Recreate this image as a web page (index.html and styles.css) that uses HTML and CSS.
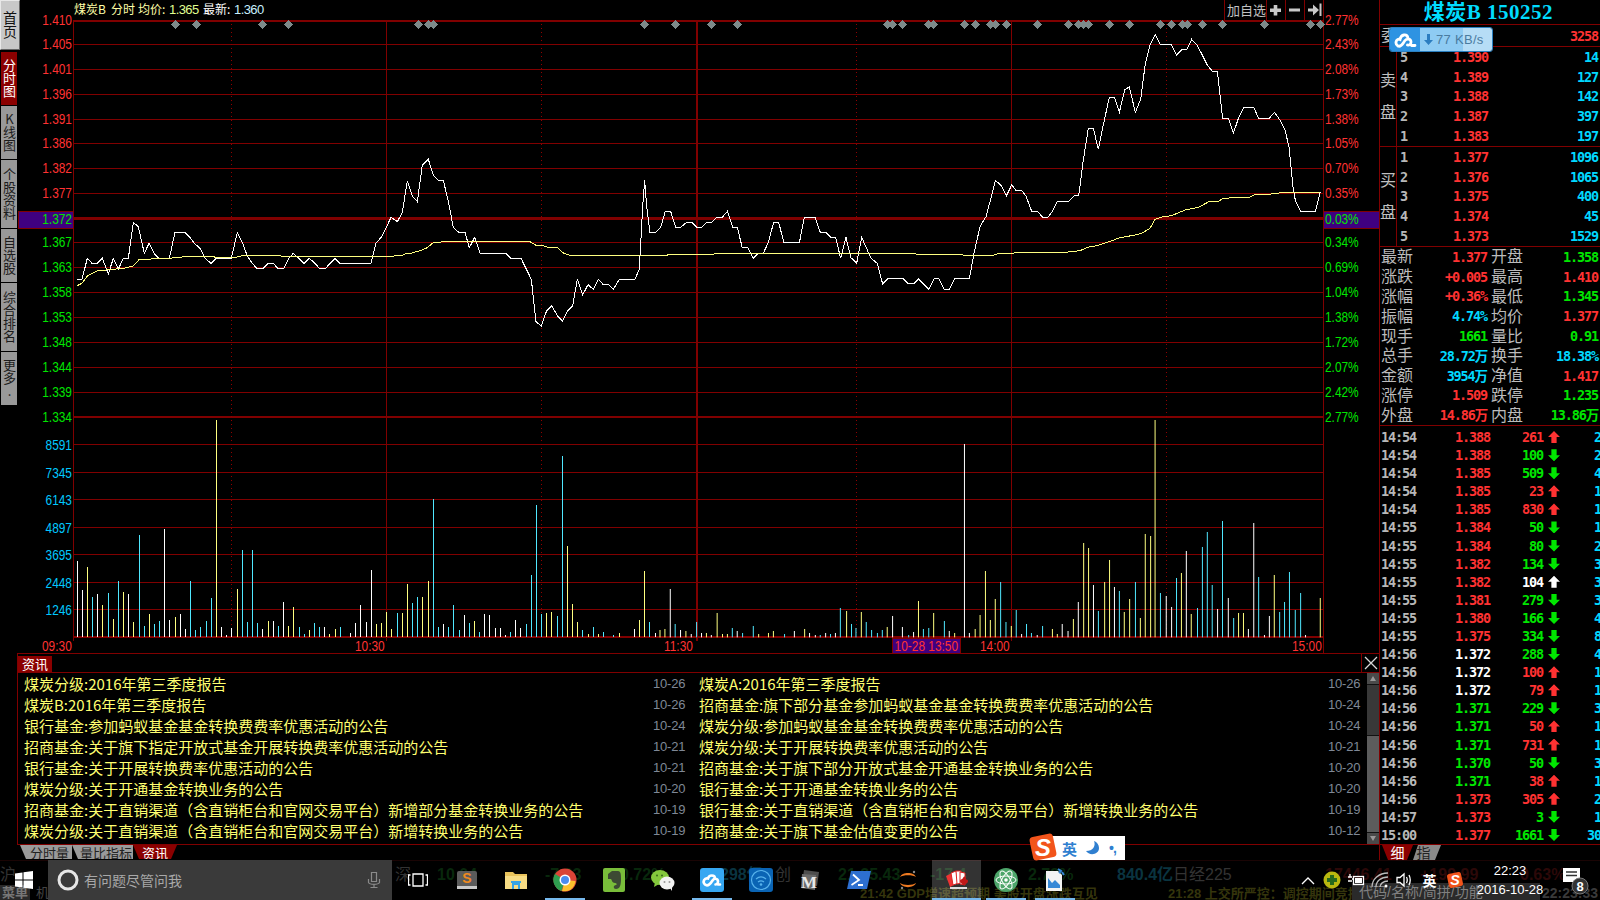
FILE: index.html
```html
<!DOCTYPE html>
<html lang="zh">
<head>
<meta charset="utf-8">
<title>煤炭B 150252</title>
<link rel="stylesheet" href="styles.css">
</head>
<body>
<svg class="defs" width="0" height="0">
  <symbol id="sg" viewBox="0 0 24 24">
    <rect x="2.5" y="2.5" width="19" height="19" rx="3" fill="#f2541b" transform="rotate(-12 12 12)"/>
    <text x="12" y="19" text-anchor="middle" class="sgs">S</text>
  </symbol>
</svg>
<div class="app">
  <div class="main">
    <nav class="nav">
      <a class="tab home">首页</a>
      <a class="tab on t3">分时图</a>
      <a class="tab t3">K线图</a>
      <a class="tab t4">个股资料</a>
      <a class="tab t3">自选股</a>
      <a class="tab t4">综合排名</a>
      <a class="tab t3">更多.</a>
    </nav>
    <section class="center">
      <svg class="chart" width="1362" height="653" viewBox="17 0 1362 653">
        <rect x="18" y="211" width="55" height="17" class="hl"/>
        <rect x="1323" y="211" width="56" height="17" class="hl"/>
        <path class="grid" d="M73 44H1323M73 69H1323M73 94H1323M73 119H1323M73 143H1323M73 168H1323M73 193H1323M73 242H1323M73 267H1323M73 292H1323M73 317H1323M73 342H1323M73 367H1323M73 392H1323M73 444H1323M73 472H1323M73 499H1323M73 527H1323M73 554H1323M73 582H1323M73 609H1323"/>
        <path class="grid b2" d="M73 20.5H1323M73 417H1323M73 637H1323"/>
        <path class="grid b3" d="M73 218H1323"/>
        <path class="grid" d="M73.500 20V641M386.500 20V641M1011.500 20V641M1323.500 0V653"/>
        <path class="grid b2" d="M697 20V641"/>
        <path class="dots" d="M231.500 20V637M541.500 20V637M856.500 20V637M1166.500 20V637"/>
        <path class="dia" d="M175 20l4.500 4.500-4.500 4.500-4.500-4.500zM196 20l4.500 4.500-4.500 4.500-4.500-4.500zM262 20l4.500 4.500-4.500 4.500-4.500-4.500zM288 20l4.500 4.500-4.500 4.500-4.500-4.500zM418 20l4.500 4.500-4.500 4.500-4.500-4.500zM428 20l4.500 4.500-4.500 4.500-4.500-4.500zM433 20l4.500 4.500-4.500 4.500-4.500-4.500zM644 20l4.500 4.500-4.500 4.500-4.500-4.500zM675 20l4.500 4.500-4.500 4.500-4.500-4.500zM711 20l4.500 4.500-4.500 4.500-4.500-4.500zM737 20l4.500 4.500-4.500 4.500-4.500-4.500zM887 20l4.500 4.500-4.500 4.500-4.500-4.500zM892 20l4.500 4.500-4.500 4.500-4.500-4.500zM902 20l4.500 4.500-4.500 4.500-4.500-4.500zM928 20l4.500 4.500-4.500 4.500-4.500-4.500zM933 20l4.500 4.500-4.500 4.500-4.500-4.500zM964 20l4.500 4.500-4.500 4.500-4.500-4.500zM975 20l4.500 4.500-4.500 4.500-4.500-4.500zM990 20l4.500 4.500-4.500 4.500-4.500-4.500zM995 20l4.500 4.500-4.500 4.500-4.500-4.500zM1006 20l4.500 4.500-4.500 4.500-4.500-4.500zM1037 20l4.500 4.500-4.500 4.500-4.500-4.500zM1068 20l4.500 4.500-4.500 4.500-4.500-4.500zM1078 20l4.500 4.500-4.500 4.500-4.500-4.500zM1083 20l4.500 4.500-4.500 4.500-4.500-4.500zM1088 20l4.500 4.500-4.500 4.500-4.500-4.500zM1109 20l4.500 4.500-4.500 4.500-4.500-4.500zM1129 20l4.500 4.500-4.500 4.500-4.500-4.500zM1160 20l4.500 4.500-4.500 4.500-4.500-4.500zM1171 20l4.500 4.500-4.500 4.500-4.500-4.500zM1182 20l4.500 4.500-4.500 4.500-4.500-4.500zM1187 20l4.500 4.500-4.500 4.500-4.500-4.500zM1202 20l4.500 4.500-4.500 4.500-4.500-4.500zM1222 20l4.500 4.500-4.500 4.500-4.500-4.500zM1264 20l4.500 4.500-4.500 4.500-4.500-4.500zM1310 20l4.500 4.500-4.500 4.500-4.500-4.500zM1320 20l4.500 4.500-4.500 4.500-4.500-4.500z"/>

        <g transform="translate(0 420) scale(.42105 .33333)">
          <path class="bar w" d="M184 652V423M196 652V510M232 652V522M305 652V522M391 652V327M403 652V600M429 652V582M441 652V627M526 652V621M538 652V645M550 652V624M624 652V627M650 652V603M674 652V546M771 652V621M833 652V639M845 652V609M857 652V555M871 652V606M883 652V450M1054 652V612M1103 652V585M1151 652V582M1163 652V585M1177 652V624M1189 652V624M1201 652V645M1225 652V600M1237 652V624M1508 652V627M1557 652V639"/>
          <path class="bar y" d="M208 652V441M244 652V555M270 652V597M294 652V516M317 652V606M355 652V582M417 652V591M514 652V0M564 652V507M638 652V603M686 652V618M697 652V561M735 652V630M783 652V642M797 652V627M895 652V612M907 652V609M918 652V576M930 652V627M956 652V579M968 652V492M1004 652V531M1018 652V483M1127 652V603M1299 652V579M1310 652V576M1348 652V378M1360 652V552M1372 652V606M1398 652V642M1422 652V642M1472 652V639M1519 652V600M1531 652V453"/>
          <path class="bar c" d="M220 652V531M258 652V519M282 652V483M331 652V345M343 652V618M367 652V612M379 652V603M452 652V483M464 652V630M476 652V621M490 652V603M502 652V534M576 652V390M588 652V606M600 652V390M612 652V609M662 652V618M711 652V621M723 652V642M747 652V609M759 652V621M809 652V621M944 652V579M980 652V549M992 652V531M1030 652V237M1042 652V621M1066 652V621M1078 652V555M1091 652V630M1115 652V609M1139 652V636M1213 652V636M1251 652V612M1263 652V465M1275 652V255M1287 652V582M1325 652V588M1336 652V108M1384 652V630M1410 652V621M1434 652V636M1458 652V645M1543 652V606"/>
        </g>
        <g transform="translate(660 420) scale(.44643 .33333)">
          <path class="bar w" d="M23 652V507M46 652V630M70 652V642M93 652V639M115 652V645M173 652V633M301 652V633M335 652V639M348 652V645M371 652V639M393 652V639M521 652V588M543 652V621M568 652V636M648 652V633M682 652V72M693 652V639M810 652V642M845 652V645M901 652V612M914 652V633M937 652V546M971 652V495M1018 652V501M1134 652V528M1146 652V561M1179 652V393M1249 652V567M1273 652V534M1318 652V627M1330 652V309M1354 652V645M1365 652V588M1446 652V645"/>
          <path class="bar y" d="M0 652V630M11 652V627M58 652V633M104 652V639M128 652V579M140 652V642M151 652V642M221 652V642M243 652V639M254 652V633M324 652V627M418 652V573M451 652V576M509 652V621M579 652V543M613 652V579M660 652V639M706 652V627M717 652V585M729 652V453M740 652V600M751 652V537M787 652V618M879 652V627M890 652V642M926 652V597M949 652V369M960 652V384M996 652V486M1007 652V420M1040 652V576M1052 652V537M1076 652V594M1087 652V342M1099 652V348M1109 652V0M1168 652V459M1190 652V582M1296 652V579M1307 652V579M1376 652V465M1479 652V534"/>
          <path class="bar c" d="M34 652V612M82 652V606M162 652V624M185 652V639M209 652V618M279 652V642M359 652V645M382 652V642M404 652V564M429 652V612M439 652V624M462 652V606M474 652V630M487 652V639M498 652V630M557 652V645M590 652V627M602 652V624M637 652V603M763 652V486M775 652V606M798 652V570M821 652V612M832 652V639M857 652V618M982 652V573M1029 652V513M1065 652V486M1121 652V519M1157 652V474M1204 652V564M1215 652V381M1226 652V336M1237 652V495M1260 652V303M1285 652V594M1341 652V471M1388 652V576M1399 652V546M1410 652V456M1423 652V570M1435 652V519"/>
        </g>

        <g transform="scale(.33333)">
          <polyline class="ln w" points="231,838 246,838 262,775 276,790 292,790 307,775 325,822 340,775 355,807 370,775 385,775 400,667 415,680 433,760 447,730 462,760 477,775 508,775 525,697 555,697 570,712 583,730 600,745 615,775 633,790 648,775 694,775 712,697 728,730 742,768 757,790 772,807 788,807 804,790 820,790 835,807 850,807 866,775 880,760 912,790 928,775 945,790 960,807 975,807 990,790 1005,775 1020,790 1113,790"/>
          <polyline class="ln y" points="231,857 246,850 262,828 276,820 292,813 307,811 370,805 400,798 418,778 455,777 462,775 505,775 535,772 565,769 640,770 650,773 695,773 720,770 725,766 840,766 845,769 1110,769"/>
        </g>
        <g transform="translate(370 10) scale(.33333)">
          <polyline class="ln w" points="3,760 18,700 35,680 50,650 63,622 82,635 97,607 112,512 127,558 142,575 157,465 175,448 190,495 205,511 220,511 235,575 250,652 265,666 285,667 298,713 314,682 330,730 408,730 422,745 453,745 484,808 498,935 514,948 530,902 545,887 562,917 578,933 593,902 608,887 622,808 638,855 654,824 670,838 685,808 700,824 715,824 730,838 748,808 795,808 808,777 818,590 824,510 830,590 840,667 858,667 872,652 886,604 902,604 917,652 932,652 950,637 965,637 980,652 995,652 1010,637 1025,637 1041,622 1057,622 1072,604 1088,652 1102,652 1117,714 1134,714 1150,745 1165,730 1180,730 1195,697 1211,637 1226,637 1242,699 1288,699 1303,622 1335,622 1351,667 1367,667 1382,682 1397,682 1412,745 1428,682 1443,745"/>
          <polyline class="ln y" points="0,739 70,739 75,736 100,735 105,732 125,729 150,722 170,714 190,698 212,697 215,694 478,694 498,706 520,707 535,712 563,713 580,729 600,736 800,736 815,738 820,736 892,736 895,733 1030,733 1035,731 1440,731"/>
        </g>
        <g transform="translate(850 10) scale(.33333)">
          <polyline class="ln w" points="5,745 20,760 35,682 63,745 82,760 98,822 113,807 160,807 175,822 190,822 206,807 236,838 252,807 267,807 283,838 298,838 314,807 358,807 372,730 390,650 408,620 420,575 436,511 454,527 469,558 485,525 498,541 515,541 528,558 545,604 563,604 578,622 594,622 607,604 622,574 656,574 672,558 686,558 700,450 715,355 730,355 745,418 761,340 778,262 793,262 808,307 824,240 838,230 856,307 872,268 886,160 900,105 916,73 932,105 965,105 980,135 995,120 1010,120 1025,88 1041,105 1057,135 1072,165 1087,184 1102,184 1118,325 1135,325 1150,370 1167,320 1182,292 1211,292 1226,325 1258,325 1273,307 1290,330 1305,360 1317,410 1330,540 1337,575 1352,604 1396,604 1411,545"/>
          <polyline class="ln y" points="0,730 195,730 200,733 335,733 340,736 428,736 445,731 490,730 495,727 645,727 690,722 712,712 740,707 775,696 810,683 850,676 875,670 900,655 915,628 940,620 965,617 1005,600 1045,592 1075,576 1105,574 1118,566 1145,563 1200,561 1215,554 1265,552 1300,547 1411,547"/>
        </g>

        <text class="hd" y="14"><tspan class="hy" x="74">煤炭B</tspan><tspan class="hy" x="111">分时</tspan><tspan class="hy" x="138">均价:</tspan><tspan class="hg hn" x="169">1.365</tspan><tspan class="hw" x="203">最新:</tspan><tspan class="hb hn" x="234">1.360</tspan></text>

        <g transform="scale(.85 1)">
          <g class="ax up end">
            <text x="84.700" y="25">1.410</text><text x="84.700" y="49">1.405</text><text x="84.700" y="74">1.401</text><text x="84.700" y="99">1.396</text><text x="84.700" y="124">1.391</text><text x="84.700" y="148">1.386</text><text x="84.700" y="173">1.382</text><text x="84.700" y="198">1.377</text>
          </g>
          <g class="ax dn end">
            <text x="84.700" y="224">1.372</text><text x="84.700" y="247">1.367</text><text x="84.700" y="272">1.363</text><text x="84.700" y="297">1.358</text><text x="84.700" y="322">1.353</text><text x="84.700" y="347">1.348</text><text x="84.700" y="372">1.344</text><text x="84.700" y="397">1.339</text><text x="84.700" y="422">1.334</text>
          </g>
          <g class="ax vol end">
            <text x="84.700" y="450">8591</text><text x="84.700" y="478">7345</text><text x="84.700" y="505">6143</text><text x="84.700" y="533">4897</text><text x="84.700" y="560">3695</text><text x="84.700" y="588">2448</text><text x="84.700" y="615">1246</text>
          </g>
          <g class="ax up">
            <text x="1558.800" y="25">2.77%</text><text x="1558.800" y="49">2.43%</text><text x="1558.800" y="74">2.08%</text><text x="1558.800" y="99">1.73%</text><text x="1558.800" y="124">1.38%</text><text x="1558.800" y="148">1.05%</text><text x="1558.800" y="173">0.70%</text><text x="1558.800" y="198">0.35%</text>
          </g>
          <g class="ax dn">
            <text x="1558.800" y="224">0.03%</text><text x="1558.800" y="247">0.34%</text><text x="1558.800" y="272">0.69%</text><text x="1558.800" y="297">1.04%</text><text x="1558.800" y="322">1.38%</text><text x="1558.800" y="347">1.72%</text><text x="1558.800" y="372">2.07%</text><text x="1558.800" y="397">2.42%</text><text x="1558.800" y="422">2.77%</text>
          </g>
        </g>
        <rect x="892" y="638" width="68" height="16" class="hl"/>
        <g transform="scale(.85 1)">
          <g class="ax up">
            <text x="49.400" y="651">09:30</text><text x="417.600" y="651">10:30</text><text x="781.200" y="651">11:30</text><text x="1052.500" y="651">10-28 13:50</text><text x="1152.900" y="651">14:00</text><text x="1520" y="651">15:00</text>
          </g>
        </g>

        <g class="tools">
          <path class="grid" d="M1224.500 0V20M1266.500 0V20M1285.500 0V20M1304.500 0V20"/>
          <text class="addt" x="1227" y="15">加自选</text>
          <path class="tool" d="M1270 8.500H1281V12H1277.300V15.500H1273.700V12H1270V8.500ZM1273.700 5H1277.300V8.500H1273.700Z"/>
          <path class="tool" d="M1289 8.500H1300V11.500H1289Z"/>
          <path class="tool" d="M1308 8.500H1313V4.500L1319 10L1313 15.500V11.500H1308ZM1319.500 3.500H1321.500V16H1319.500Z"/>
        </g>
      </svg>

      <div class="news">
        <header class="nhead"><span class="ntab">资讯</span><span class="nclose"><svg width="14" height="14" viewBox="0 0 14 14"><path d="M1 1L13 13M13 1L1 13" class="x"/></svg></span></header>
        <div class="nbody">
          <div class="nlist">
            <div class="nrow"><span class="nt">煤炭分级:2016年第三季度报告</span><span class="nd">10-26</span></div>
            <div class="nrow"><span class="nt">煤炭A:2016年第三季度报告</span><span class="nd">10-26</span></div>
            <div class="nrow"><span class="nt">煤炭B:2016年第三季度报告</span><span class="nd">10-26</span></div>
            <div class="nrow"><span class="nt">招商基金:旗下部分基金参加蚂蚁基金基金转换费费率优惠活动的公告</span><span class="nd">10-24</span></div>
            <div class="nrow"><span class="nt">银行基金:参加蚂蚁基金基金转换费费率优惠活动的公告</span><span class="nd">10-24</span></div>
            <div class="nrow"><span class="nt">煤炭分级:参加蚂蚁基金基金转换费费率优惠活动的公告</span><span class="nd">10-24</span></div>
            <div class="nrow"><span class="nt">招商基金:关于旗下指定开放式基金开展转换费率优惠活动的公告</span><span class="nd">10-21</span></div>
            <div class="nrow"><span class="nt">煤炭分级:关于开展转换费率优惠活动的公告</span><span class="nd">10-21</span></div>
            <div class="nrow"><span class="nt">银行基金:关于开展转换费率优惠活动的公告</span><span class="nd">10-21</span></div>
            <div class="nrow"><span class="nt">招商基金:关于旗下部分开放式基金开通基金转换业务的公告</span><span class="nd">10-20</span></div>
            <div class="nrow"><span class="nt">煤炭分级:关于开通基金转换业务的公告</span><span class="nd">10-20</span></div>
            <div class="nrow"><span class="nt">银行基金:关于开通基金转换业务的公告</span><span class="nd">10-20</span></div>
            <div class="nrow"><span class="nt">招商基金:关于直销渠道（含直销柜台和官网交易平台）新增部分基金转换业务的公告</span><span class="nd">10-19</span></div>
            <div class="nrow"><span class="nt">银行基金:关于直销渠道（含直销柜台和官网交易平台）新增转换业务的公告</span><span class="nd">10-19</span></div>
            <div class="nrow"><span class="nt">煤炭分级:关于直销渠道（含直销柜台和官网交易平台）新增转换业务的公告</span><span class="nd">10-19</span></div>
            <div class="nrow"><span class="nt">招商基金:关于旗下基金估值变更的公告</span><span class="nd">10-12</span></div>
          </div>
          <div class="sb"><i class="sbb sbu"></i><i class="sbth"></i><i class="sbtr"></i><i class="sbb sbd"></i></div>
        </div>
      </div>
      <div class="btabs">
        <span class="bt">分时量</span><span class="bt">量比指标</span><span class="bt act">资讯</span>
      </div>
    </section>

    <aside class="side">
      <h1 class="ttl">煤炭B 150252</h1>
      <div class="wei"><span class="lab">委比</span><span class="m r">3258</span></div>
      <div class="book">
        <div class="sidelab"><span>卖</span><span>盘</span></div>
        <div class="lvls">
          <div class="lvl"><span class="m g0">5</span><span class="m r">1.390</span><span class="m c">14</span></div>
          <div class="lvl"><span class="m g0">4</span><span class="m r">1.389</span><span class="m c">127</span></div>
          <div class="lvl"><span class="m g0">3</span><span class="m r">1.388</span><span class="m c">142</span></div>
          <div class="lvl"><span class="m g0">2</span><span class="m r">1.387</span><span class="m c">397</span></div>
          <div class="lvl"><span class="m g0">1</span><span class="m r">1.383</span><span class="m c">197</span></div>
        </div>
      </div>
      <div class="book">
        <div class="sidelab"><span>买</span><span>盘</span></div>
        <div class="lvls">
          <div class="lvl"><span class="m g0">1</span><span class="m r">1.377</span><span class="m c">1096</span></div>
          <div class="lvl"><span class="m g0">2</span><span class="m r">1.376</span><span class="m c">1065</span></div>
          <div class="lvl"><span class="m g0">3</span><span class="m r">1.375</span><span class="m c">400</span></div>
          <div class="lvl"><span class="m g0">4</span><span class="m r">1.374</span><span class="m c">45</span></div>
          <div class="lvl"><span class="m g0">5</span><span class="m r">1.373</span><span class="m c">1529</span></div>
        </div>
      </div>
      <div class="stats">
        <div class="kv"><span class="lab">最新</span><span class="m r">1.377</span></div><div class="kv"><span class="lab">开盘</span><span class="m g">1.358</span></div>
        <div class="kv"><span class="lab">涨跌</span><span class="m r">+0.005</span></div><div class="kv"><span class="lab">最高</span><span class="m r">1.410</span></div>
        <div class="kv"><span class="lab">涨幅</span><span class="m r">+0.36%</span></div><div class="kv"><span class="lab">最低</span><span class="m g">1.345</span></div>
        <div class="kv"><span class="lab">振幅</span><span class="m c">4.74%</span></div><div class="kv"><span class="lab">均价</span><span class="m r">1.377</span></div>
        <div class="kv"><span class="lab">现手</span><span class="m g">1661</span></div><div class="kv"><span class="lab">量比</span><span class="m g">0.91</span></div>
        <div class="kv"><span class="lab">总手</span><span class="m c">28.72万</span></div><div class="kv"><span class="lab">换手</span><span class="m c">18.38%</span></div>
        <div class="kv"><span class="lab">金额</span><span class="m c">3954万</span></div><div class="kv"><span class="lab">净值</span><span class="m r">1.417</span></div>
        <div class="kv"><span class="lab">涨停</span><span class="m r">1.509</span></div><div class="kv"><span class="lab">跌停</span><span class="m g">1.235</span></div>
        <div class="kv"><span class="lab">外盘</span><span class="m r">14.86万</span></div><div class="kv"><span class="lab">内盘</span><span class="m g">13.86万</span></div>
      </div>
      <div class="ticks">
        <div class="tk"><span class="m g0">14:54</span><span class="m r">1.388</span><span class="m r">261</span><i class="ar au r"></i><span class="m c">2</span></div>
        <div class="tk"><span class="m g0">14:54</span><span class="m r">1.388</span><span class="m g">100</span><i class="ar ad g"></i><span class="m c">2</span></div>
        <div class="tk"><span class="m g0">14:54</span><span class="m r">1.385</span><span class="m g">509</span><i class="ar ad g"></i><span class="m c">4</span></div>
        <div class="tk"><span class="m g0">14:54</span><span class="m r">1.385</span><span class="m r">23</span><i class="ar au r"></i><span class="m c">1</span></div>
        <div class="tk"><span class="m g0">14:54</span><span class="m r">1.385</span><span class="m r">830</span><i class="ar au r"></i><span class="m c">1</span></div>
        <div class="tk"><span class="m g0">14:55</span><span class="m r">1.384</span><span class="m g">50</span><i class="ar ad g"></i><span class="m c">1</span></div>
        <div class="tk"><span class="m g0">14:55</span><span class="m r">1.384</span><span class="m g">80</span><i class="ar ad g"></i><span class="m c">2</span></div>
        <div class="tk"><span class="m g0">14:55</span><span class="m r">1.382</span><span class="m g">134</span><i class="ar ad g"></i><span class="m c">3</span></div>
        <div class="tk"><span class="m g0">14:55</span><span class="m r">1.382</span><span class="m w">104</span><i class="ar au w"></i><span class="m c">3</span></div>
        <div class="tk"><span class="m g0">14:55</span><span class="m r">1.381</span><span class="m g">279</span><i class="ar ad g"></i><span class="m c">3</span></div>
        <div class="tk"><span class="m g0">14:55</span><span class="m r">1.380</span><span class="m g">166</span><i class="ar ad g"></i><span class="m c">4</span></div>
        <div class="tk"><span class="m g0">14:55</span><span class="m r">1.375</span><span class="m g">334</span><i class="ar ad g"></i><span class="m c">8</span></div>
        <div class="tk"><span class="m g0">14:56</span><span class="m w">1.372</span><span class="m g">288</span><i class="ar ad g"></i><span class="m c">4</span></div>
        <div class="tk"><span class="m g0">14:56</span><span class="m w">1.372</span><span class="m r">100</span><i class="ar au r"></i><span class="m c">1</span></div>
        <div class="tk"><span class="m g0">14:56</span><span class="m w">1.372</span><span class="m r">79</span><i class="ar au r"></i><span class="m c">1</span></div>
        <div class="tk"><span class="m g0">14:56</span><span class="m g">1.371</span><span class="m g">229</span><i class="ar ad g"></i><span class="m c">3</span></div>
        <div class="tk"><span class="m g0">14:56</span><span class="m g">1.371</span><span class="m r">50</span><i class="ar au r"></i><span class="m c">1</span></div>
        <div class="tk"><span class="m g0">14:56</span><span class="m g">1.371</span><span class="m r">731</span><i class="ar au r"></i><span class="m c">1</span></div>
        <div class="tk"><span class="m g0">14:56</span><span class="m g">1.370</span><span class="m g">50</span><i class="ar ad g"></i><span class="m c">3</span></div>
        <div class="tk"><span class="m g0">14:56</span><span class="m g">1.371</span><span class="m r">38</span><i class="ar au r"></i><span class="m c">1</span></div>
        <div class="tk"><span class="m g0">14:56</span><span class="m r">1.373</span><span class="m r">305</span><i class="ar au r"></i><span class="m c">2</span></div>
        <div class="tk"><span class="m g0">14:57</span><span class="m r">1.373</span><span class="m g">3</span><i class="ar ad g"></i><span class="m c">1</span></div>
        <div class="tk"><span class="m g0">15:00</span><span class="m r">1.377</span><span class="m g">1661</span><i class="ar ad g"></i><span class="m c">30</span></div>
      </div>
      <div class="rtabs"><span class="rt act">细</span><span class="rt">指</span></div>
    </aside>
  </div>

  <footer class="taskbar">
    <div class="ticker">
      <span class="q q1">沪</span><span class="q q2">深</span><span class="q q3">10 04</span><span class="q q4">-7.03</span><span class="q q5">0.72%</span><span class="q q6">298亿</span><span class="q q7">创</span><span class="q q8">21.35.43</span><span class="q q9">-17.4</span><span class="q q10">2.78%</span><span class="q q11">840.4亿</span><span class="q q12">日经225</span><span class="q q13">17446.41</span><span class="q q14">+199.99</span><span class="q q15">0.63%</span>
      <span class="q menu">菜单</span><span class="q machine">机</span>
      <span class="q n1">21:42 GDP增速超预期 美股开盘涨跌互见</span><span class="q n2">21:28 上交所严控：调控期间竞拍</span>
      <span class="q inp">代码/名称/简拼/功能</span><span class="q clk2">22:23:33</span>
    </div>
    <div class="start"><svg width="18" height="18" viewBox="0 0 18 18"><path class="wh" d="M0 2.500L7.500 1.400V8.500H0ZM8.500 1.300L18 0V8.500H8.500ZM0 9.500H7.500V16.600L0 15.500ZM8.500 9.500H18V18L8.500 16.700Z"/></svg></div>
    <div class="search">
      <svg width="24" height="24" viewBox="0 0 24 24"><circle cx="12" cy="12" r="9" class="ring"/></svg>
      <span class="stext">有问题尽管问我</span>
      <svg class="mic" width="14" height="18" viewBox="0 0 14 18"><path class="micp" d="M4.500 1.500H9.500V10.500H4.500ZM1.500 8V11.500C3 14 11 14 12.500 11.500V8M7 13.500V16.500M3.500 16.500H10.500"/></svg>
    </div>
    <div class="apps">
      <div class="app-i"><svg width="20" height="14" viewBox="0 0 20 14"><path class="wline" d="M5 1H15V13H5ZM2.500 2H.5V12H2.500M17.500 2H19.500V12H17.500"/></svg></div>
      <div class="app-i"><svg width="22" height="22" viewBox="0 0 22 22"><rect x="1" y="2" width="20" height="18" rx="2" fill="#5b5b5b"/><rect x="1" y="17" width="20" height="3" fill="#c9c9c9"/><text x="11" y="14" text-anchor="middle" class="sub">S</text></svg></div>
      <div class="app-i"><svg width="24" height="22" viewBox="0 0 24 22"><path d="M1 3H9L11 5H23V20H1Z" fill="#e9c35b"/><path d="M1 7H23V20H1Z" fill="#f7dc84"/><path d="M8 13H16V20H14V16H10V20H8Z" fill="#35a4e4"/><rect x="7" y="12" width="10" height="2" fill="#35a4e4"/></svg></div>
      <div class="app-i run"><svg width="24" height="24" viewBox="0 0 24 24"><circle cx="12" cy="12" r="11.500" fill="#db4437"/><path d="M12 12L22.500 13A11 11 0 0 1 9 23Z" fill="#fbc02d"/><path d="M12 12L8.500 23A11.500 11.500 0 0 1 2 6Z" fill="#2e9e4f"/><circle cx="12" cy="12" r="5.500" fill="#fff"/><circle cx="12" cy="12" r="4" fill="#4a8cf0"/></svg></div>
      <div class="app-i"><svg width="22" height="24" viewBox="0 0 22 24"><rect width="22" height="24" rx="2" fill="#79bd3a"/><path d="M5 6L9 3H15C18 3 18 7 18 11C18 17 17 21 13 21C10 21 10 17 13 17C14 17 14 15 12 15C9 15 9 12 8 11H5Z" fill="#3c4a33"/></svg></div>
      <div class="app-i"><svg width="24" height="22" viewBox="0 0 24 22"><ellipse cx="9" cy="8.500" rx="9" ry="7.500" fill="#84c83c"/><path d="M4 13L3 18L8 15Z" fill="#84c83c"/><ellipse cx="16" cy="14" rx="7.500" ry="6.500" fill="#f2f2f2"/><path d="M19 19L21 22L21 17Z" fill="#f2f2f2"/><circle cx="13.500" cy="13" r="1" fill="#999"/><circle cx="18.500" cy="13" r="1" fill="#999"/><circle cx="6" cy="6.500" r="1" fill="#3a6a1a"/><circle cx="11" cy="6.500" r="1" fill="#3a6a1a"/></svg></div>
      <div class="app-i run"><svg width="24" height="24" viewBox="0 0 24 24"><rect width="24" height="24" rx="3" fill="#36a7f2"/><path class="cloud" d="M5 16.500C2 14 4.500 9.500 8 10.500C9 6.500 15 6.500 15 10.500M5 16.500C8 19 11 15 12.500 12.500C14 10 18 10 18 13.500C18 15 17 16.500 15.500 16.500M18 16.500H20"/></svg></div>
      <div class="app-i"><svg width="24" height="24" viewBox="0 0 24 24"><rect width="24" height="24" rx="3" fill="#0a64b4"/><circle cx="12" cy="12" r="9.500" class="wf"/><path class="wf" d="M7 11C10 8.500 14 8.500 17 11M9 14C11 12.500 13 12.500 15 14"/><circle cx="12" cy="16.500" r="1.300" fill="#58b3ec"/></svg></div>
      <div class="app-i"><svg width="22" height="24" viewBox="0 0 22 24"><path d="M5 2L20 4L18 18L3 16Z" fill="#4e4e4e"/><path d="M3 6L17 7L16 22L2 20Z" fill="#6a6a6a"/><text x="10" y="20" text-anchor="middle" class="mm">M</text></svg></div>
      <div class="app-i"><svg width="24" height="20" viewBox="0 0 24 20"><path d="M4 1H24L20 19H0Z" fill="#2d6fd0"/><path class="pss" d="M6 4.500L12 10L4.500 15M11 15H16"/></svg></div>
      <div class="app-i"><svg width="20" height="22" viewBox="0 0 20 22"><path d="M2 8C4 2.500 16 2.500 18 8C15 5.500 5 5.500 2 8ZM2 14C4 19.500 16 19.500 18 14C15 16.500 5 16.500 2 14Z" fill="#ef7a21"/><circle cx="16" cy="3" r="1.200" fill="#888"/><circle cx="4" cy="19" r="1.200" fill="#888"/></svg></div>
      <div class="app-i cur run"><svg width="24" height="20" viewBox="0 0 24 20"><path d="M1 6L7 3L11 14L5 17Z" fill="#e33" /><path d="M6 3L11 1L14 13L8 15Z" fill="#fff" stroke="#d22"/><path d="M11 1L16 1L17 13L12 14Z" fill="#fff" stroke="#d22"/><path d="M15 2L20 3L20 15L15 14Z" fill="#fff" stroke="#d22"/><path d="M18 8C19 6 21 6 21 9C21 10 23 9 23 11C23 14 19 14 20 15H18C19 14 15 14 15 11C15 9 17 10 18 8Z" fill="#c01818"/><path d="M5 17H22V19H5Z" fill="#ddd"/></svg></div>
      <div class="app-i run"><svg width="24" height="24" viewBox="0 0 24 24"><circle cx="12" cy="12" r="12" fill="#4da56a"/><g class="at"><ellipse cx="12" cy="12" rx="10" ry="4"/><ellipse cx="12" cy="12" rx="10" ry="4" transform="rotate(60 12 12)"/><ellipse cx="12" cy="12" rx="10" ry="4" transform="rotate(120 12 12)"/></g><circle cx="12" cy="12" r="1.800" fill="#fff"/></svg></div>
      <div class="app-i run"><svg width="22" height="24" viewBox="0 0 22 24"><path d="M2 3H14L18 7V23H2Z" fill="#f3f3f3"/><path d="M4 10L8 15L11 12L16 17V20H4Z" fill="#3688d6"/><path d="M14 1L17 3L15 5M18 4L20 7" stroke="#3688d6" stroke-width="2" fill="none"/></svg></div>
    </div>
    <div class="tray">
      <div class="ti"><svg width="14" height="9" viewBox="0 0 14 9"><path class="wline" d="M1 8L7 2L13 8"/></svg></div>
      <div class="ti"><svg width="18" height="18" viewBox="0 0 18 18"><circle cx="9" cy="9" r="8.500" fill="#b9b810"/><path d="M7 4H11V7H14V11H11V14H7V11H4V7H7Z" fill="#26691c"/></svg></div>
      <div class="ti"><svg width="18" height="14" viewBox="0 0 18 14"><rect x="6.500" y="3.500" width="10" height="8" class="wline"/><rect x="8" y="5" width="7" height="5" fill="#fff"/><path class="wline" d="M1 4H5M1 8H5M3 1V4M5 6H7"/></svg></div>
      <div class="ti"><svg width="18" height="16" viewBox="0 0 18 16"><path class="wline dim" d="M1 15C1 7 8 1 17 1M5 15C5 9 10 5 17 5M9 15C9 12 12 9 17 9"/><circle cx="15" cy="14" r="1.500" fill="#fff"/></svg></div>
      <div class="ti"><svg width="16" height="16" viewBox="0 0 16 16"><path class="wline" d="M1 5.500H4L8 2V14L4 10.500H1ZM10.500 5C11.500 7 11.500 9 10.500 11M13 3C14.500 6 14.500 10 13 13"/></svg></div>
      <div class="ti tl">英</div>
      <div class="ti"><svg width="18" height="18"><use href="#sg"/></svg></div>
      <div class="clock"><span>22:23</span><span>2016-10-28</span></div>
      <div class="msg"><svg width="30" height="30" viewBox="0 0 30 30"><path d="M2 3H19V17H2Z" fill="#fff"/><path d="M5 7H16M5 10.500H16" stroke="#333" stroke-width="1.500"/><circle cx="19" cy="21" r="8" fill="#333" stroke="#777"/><text x="19" y="25.500" text-anchor="middle" class="bd">8</text></svg></div>
    </div>
  </footer>

  <div class="cloudw">
    <span class="cl"><svg width="24" height="16" viewBox="0 0 24 16"><path class="cloud2" d="M5 14C1.500 12 3 6 7 7.500C8 2 14 1.500 15 6M5 14C8.500 15.500 10 11 12 8.500C14 6 18 7 18 10C18 12.500 16 13.500 14.500 13M18.500 13.500H22"/></svg></span>
    <span class="cr"><svg width="11" height="15" viewBox="0 0 11 15"><path d="M4 2H7V8H10L5.500 13L1 8H4Z" fill="#2c7dc0"/></svg><span class="cs">77 KB/s</span></span>
  </div>
  <div class="sgbar">
    <svg class="sglogo" width="30" height="30"><use href="#sg"/></svg>
    <span class="sgen">英</span>
    <svg width="18" height="16" viewBox="0 0 18 16"><path d="M10 1C12 6 9 11 2 11C5 16 15 15 15 8C15 5 13 2 10 1Z" fill="#2f7fd0"/></svg>
    <span class="sgp">•,</span>
  </div>
</div>
</body>
</html>
```

FILE: styles.css
```css
* { box-sizing: border-box; margin: 0; padding: 0; }
html, body { width: 1600px; height: 900px; background: #000; overflow: hidden; }
body { font-family: "Noto Sans CJK SC", sans-serif; color: #c0c0c0; }
.defs { position: absolute; }
.app { width: 1600px; height: 900px; display: grid; grid-template-rows: 860px 40px; position: relative; overflow: hidden; background: #000; }
.main { display: grid; grid-template-columns: 17px 1362px 221px; height: 860px; overflow: hidden; }

/* left nav */
.nav { display: flex; flex-direction: column; gap: 1px; position: relative; z-index: 2; width: 21px; }
.tab { width: 16px; margin-left: 1px; display: flex; align-items: center; justify-content: center; writing-mode: vertical-rl; text-orientation: upright; font-size: 13px; line-height: 14px; letter-spacing: 0; background: #999; color: #1c1c1c; height: 53px; }
.t4 { height: 68px; }
.t3 { height: 53px; }
.home { width: 20px; height: 50px; margin: 0 0 1px 0; background: #c8c8c8; border: 1px solid #e8e8e8; border-right-color: #666; border-bottom-color: #666; font-size: 14px; color: #111; }
.on { background: #8b0000; color: #fff; }

/* chart */
.center { display: flex; flex-direction: column; width: 1362px; }
.chart { display: block; flex: none; }
.grid { fill: none; stroke: #800000; stroke-width: 1; shape-rendering: crispEdges; }
.b2 { stroke-width: 2; }
.b3 { stroke-width: 3; }
.dots { fill: none; stroke: #900000; stroke-width: 1; stroke-dasharray: 1 3; shape-rendering: crispEdges; }
.hl { fill: #3f0080; stroke: #800000; stroke-width: 1; shape-rendering: crispEdges; }
.dia { fill: #7d8a8a; shape-rendering: crispEdges; }
.bar { fill: none; stroke-width: 1; vector-effect: non-scaling-stroke; shape-rendering: crispEdges; }
.ln { fill: none; stroke-width: 1; vector-effect: non-scaling-stroke; shape-rendering: crispEdges; }
.bar.w, .ln.w { stroke: #fff; }
.bar.y { stroke: #ffff80; }
.ln.y { stroke: #ffff80; }
.bar.c { stroke: #50e8ff; }
.ax text { font-family: "Liberation Sans", sans-serif; font-size: 14px; }
.end text { text-anchor: end; }
.ax.up text { fill: #ff3232; }
.ax.dn text { fill: #00e600; }
.ax.vol text { fill: #00c8ff; }
.hd { font-family: "Noto Sans CJK SC", sans-serif; font-size: 12px; }
.hn { font-family: "Liberation Sans", sans-serif; font-size: 13px; letter-spacing: -.6px; }
.hy { fill: #ffffa8; }
.hg { fill: #e0ff90; }
.hw { fill: #fff; }
.hb { fill: #c8f0ff; }
.addt { font-size: 13px; fill: #c0c0c0; font-family: "Noto Sans CJK SC", sans-serif; }
.tool { fill: #c8c8c8; }

/* news */
.news { height: 192px; flex: none; border: 1px solid #800000; border-right: 0; display: flex; flex-direction: column; }
.nhead { height: 19px; flex: none; display: flex; justify-content: space-between; border-bottom: 1px solid #800000; }
.ntab { width: 34px; background: #8b0000; color: #fff; font-size: 13px; line-height: 15px; height: 16px; margin-top: 2px; text-align: center; }
.nclose { width: 18px; border-left: 1px solid #800000; display: flex; align-items: center; justify-content: center; }
.x { stroke: #d8d8d8; stroke-width: 1.300; fill: none; }
.nbody { flex: 1; display: grid; grid-template-columns: 1fr 12px; min-height: 0; }
.nlist { display: grid; grid-template-columns: 660px 683px; grid-auto-rows: 21px; padding: 0 0 0 6px; }
.nrow { display: flex; justify-content: space-between; align-items: center; font-size: 15px; white-space: nowrap; }
.nrow:nth-child(even) { padding: 0 0 0 15px; }
.nrow:nth-child(even) .nd { width: 32px; margin-right: 7px; }
.nt { color: #ffff70; }
.nd { font-family: "Liberation Sans", sans-serif; font-size: 13px; letter-spacing: -.2px; color: #7f8896; width: 31px; }
.sb { display: flex; flex-direction: column; gap: 1px; background: #111; }
.sbb { height: 11px; background: #4a4a4a; flex: none; position: relative; }
.sbu::after, .sbd::after { content: ""; position: absolute; left: 3px; top: 3px; border: 3px solid transparent; }
.sbu::after { border-bottom: 5px solid #999; border-top: 0; }
.sbd::after { border-top: 5px solid #999; border-bottom: 0; }
.sbth { height: 50px; background: #383838; flex: none; }
.sbtr { flex: 1; background: #5c5c5c; }

/* bottom tabs */
.btabs { height: 14px; flex: none; display: flex; padding-left: 3px; overflow: hidden; font-size: 13px; line-height: 15px; }
.bt { background: #9a9a9a; color: #222; padding-left: 10px; clip-path: polygon(0 0, 100% 0, calc(100% + 0px) 100%, 6px 100%); white-space: nowrap; width: 52px; flex: none; }
.bt:nth-child(2) { width: 61px; padding-left: 8px; }
.bt:nth-child(3) { width: 44px; padding-left: 9px; clip-path: polygon(0 0, 100% 0, calc(100% - 6px) 100%, 6px 100%); }
.bt.act { background: #8b0000; color: #fff; }

/* right panel */
.side { width: 221px; display: flex; flex-direction: column; border-left: 1px solid #800000; height: 860px; overflow: hidden; }
.ttl { height: 24px; flex: none; margin-left: -1px; font-family: "Liberation Serif", "Noto Sans CJK SC", serif; font-size: 21px; line-height: 24px; font-weight: 700; color: #00dcff; text-align: center; letter-spacing: .5px; background: #000; padding-right: 2px; }
.wei { height: 23px; flex: none; display: flex; justify-content: space-between; align-items: center; border-top: 1px solid #800000; border-bottom: 1px solid #800000; padding: 0 2px 0 1px; }
.lab { font-size: 16px; line-height: 20px; color: #bcbcbc; white-space: nowrap; padding-bottom: 3px; }
.m { font-family: "DejaVu Sans Mono", "Noto Sans CJK SC", monospace; font-size: 13.500px; font-weight: 700; letter-spacing: -1.130px; line-height: 18px; white-space: nowrap; }
.r { color: #ff3232; }
.g { color: #00e600; }
.c { color: #00d8ff; }
.w { color: #fff; }
.g0 { color: #b8b8b8; }
.book { height: 100px; flex: none; display: grid; grid-template-columns: 17px 1fr; border-bottom: 1px solid #800000; }
.sidelab { border-right: 1px solid #800000; display: flex; flex-direction: column; align-items: center; justify-content: center; gap: 12px; font-size: 16px; line-height: 20px; padding-bottom: 3px; }
.lvls { display: grid; grid-auto-rows: 19.800px; }
.lvl { display: grid; grid-template-columns: 20px 68px 1fr; padding: 0 2px 0 3px; align-items: center; text-align: right; }
.lvl span:first-child { text-align: left; }
.stats { height: 179px; flex: none; display: grid; grid-template-columns: 106px 1fr; grid-auto-rows: 19.800px; column-gap: 4px; border-bottom: 1px solid #800000; padding: 0 2px 0 1px; }
.kv { display: flex; justify-content: space-between; align-items: center; }
.ticks { flex: none; height: 419px; display: grid; grid-template-rows: repeat(23, 1fr); border-bottom: 1px solid #800000; overflow: hidden; padding-top: 2px; }
.tk { display: grid; grid-template-columns: 55px 54px 53px 18px 40px; padding-left: 1px; align-items: center; text-align: right; }
.tk span:first-child { text-align: left; }
.ar { display: block; width: 12px; height: 12px; margin-left: 5px; background: currentColor; }
.au { clip-path: polygon(50% 0, 100% 50%, 72% 50%, 72% 100%, 28% 100%, 28% 50%, 0 50%); }
.ad { clip-path: polygon(28% 0, 72% 0, 72% 50%, 100% 50%, 50% 100%, 0 50%, 28% 50%); }
.rtabs { height: 15px; flex: none; display: flex; padding-left: 2px; font-size: 14px; line-height: 15px; overflow: hidden; }
.rt { width: 28px; padding-right: 7px; text-align: center; background: #8a8a8a; color: #222; clip-path: polygon(5px 0, 100% 0, calc(100% - 6px) 100%, 0 100%); flex: none; }
.rt.act { width: 31px; padding-right: 0; background: #8b0000; color: #fff; clip-path: polygon(0 0, 100% 0, calc(100% - 6px) 100%, 6px 100%); }

/* taskbar */
.taskbar { height: 40px; display: flex; position: relative; background: #000; }
.ticker { position: absolute; inset: 0; overflow: hidden; border-top: 1px solid #1a0404; }
.q { position: absolute; top: 4px; font-family: "Liberation Sans", "Noto Sans CJK SC", sans-serif; font-size: 16px; line-height: 20px; font-weight: 700; white-space: nowrap; color: #08280c; }
.q1 { left: 0; color: #333; font-weight: 400; }
.q2 { left: 395px; color: #333; font-weight: 400; }
.q3 { left: 437px; }
.q4 { left: 545px; }
.q5 { left: 620px; }
.q6 { left: 720px; color: #0a3440; }
.q7 { left: 775px; color: #333; font-weight: 400; }
.q8 { left: 838px; }
.q9 { left: 930px; }
.q10 { left: 1028px; }
.q11 { left: 1117px; color: #0a3440; }
.q12 { left: 1173px; color: #333; font-weight: 400; }
.q13 { left: 1325px; color: #2c0808; }
.q14 { left: 1420px; color: #2c0808; }
.q15 { left: 1520px; color: #2c0808; }
.n1 { left: 860px; top: 23px; font-size: 13px; color: #35350c; }
.n2 { left: 1168px; top: 23px; font-size: 13px; color: #35350c; }
.menu { left: 0; top: 24px; font-size: 13px; color: #777; background: #2a2a2a; padding: 0 2px; line-height: 16px; }
.machine { left: 36px; top: 24px; font-size: 13px; color: #444; font-weight: 400; line-height: 16px; }
.inp { left: 1352px; top: 22px; width: 188px; height: 18px; padding-left: 7px; font-size: 14px; line-height: 18px; font-weight: 400; color: #808080; background: #2a2a2a; }
.clk2 { left: 1542px; top: 22px; font-size: 14px; color: #3a3a3a; }
.start { width: 48px; flex: none; display: flex; align-items: center; justify-content: center; position: relative; }
.wh { fill: #fff; }
.search { width: 344px; flex: none; background: #3a3a3a; display: flex; align-items: center; padding: 0 11px 0 8px; position: relative; }
.ring { fill: none; stroke: #e6e6e6; stroke-width: 3; }
.stext { font-size: 14px; color: #a8a8a8; margin-left: 4px; flex: 1; }
.mic { flex: none; }
.micp { fill: none; stroke: #8a8a8a; stroke-width: 1.200; }
.apps { display: flex; position: relative; padding-left: 1px; }
.app-i { width: 49px; height: 40px; display: flex; align-items: center; justify-content: center; position: relative; }
.run::after { content: ""; position: absolute; left: 5px; right: 4px; bottom: 0; height: 2px; background: #76b9ed; }
.cur { background: rgba(255, 255, 255, .2); }
.cur::after { left: 0; right: 0; }
.wline { fill: none; stroke: #fff; stroke-width: 1.300; }
.dim { stroke: #bbb; }
.sub { font: 700 14px "Liberation Sans", sans-serif; fill: #ef8a1e; }
.cloud { fill: none; stroke: #fff; stroke-width: 2.600; stroke-linecap: round; }
.cloud2 { fill: none; stroke: #fff; stroke-width: 2.800; stroke-linecap: round; }
.wf { fill: none; stroke: #58b3ec; stroke-width: 1.200; }
.mm { font: 700 17px "Liberation Serif", serif; fill: #e8e8e8; }
.pss { fill: none; stroke: #fff; stroke-width: 1.800; }
.at { fill: none; stroke: #fff; stroke-width: 1; }
.tray { margin-left: auto; width: 304px; flex: none; display: flex; align-items: center; position: relative; }
.ti { width: 24px; height: 40px; flex: none; display: flex; align-items: center; justify-content: center; }
.tl { color: #fff; font-size: 14px; font-weight: 700; width: 27px; }
.clock { width: 80px; flex: none; margin-left: 3px; display: flex; flex-direction: column; align-items: center; color: #fff; font: 13px/19px "Liberation Sans", sans-serif; }
.msg { flex: 1; display: flex; align-items: center; justify-content: center; padding-left: 2px; }
.bd { font: 700 13px "Liberation Sans", sans-serif; fill: #fff; }
.sgs { font: italic 900 19px "Liberation Sans", sans-serif; fill: #fff; }

/* overlays */
.cloudw { position: absolute; left: 1389px; top: 27px; width: 104px; height: 25px; display: flex; border: 1px solid #2a7fc0; border-radius: 3px; overflow: hidden; }
.cl { width: 30px; flex: none; background: #2e93e2; display: flex; align-items: center; justify-content: center; }
.cr { flex: 1; display: flex; align-items: center; gap: 2px; padding-left: 3px; background: linear-gradient(90deg, #8ecbf3 0, #8ecbf3 60%, #b6ddf6 60%, #b6ddf6 100%); color: #4a7ba0; }
.cs { font: 13px "Liberation Sans", sans-serif; letter-spacing: .3px; }
.sgbar { position: absolute; left: 1038px; top: 836px; width: 87px; height: 24px; background: #fff; display: flex; align-items: center; gap: 7px; padding-left: 24px; }
.sglogo { position: absolute; left: -10px; top: -4px; }
.sgen { font-size: 15px; font-weight: 700; color: #2f7fd0; }
.sgp { font: 700 14px "Liberation Sans", sans-serif; color: #2f7fd0; letter-spacing: -1px; }
```
